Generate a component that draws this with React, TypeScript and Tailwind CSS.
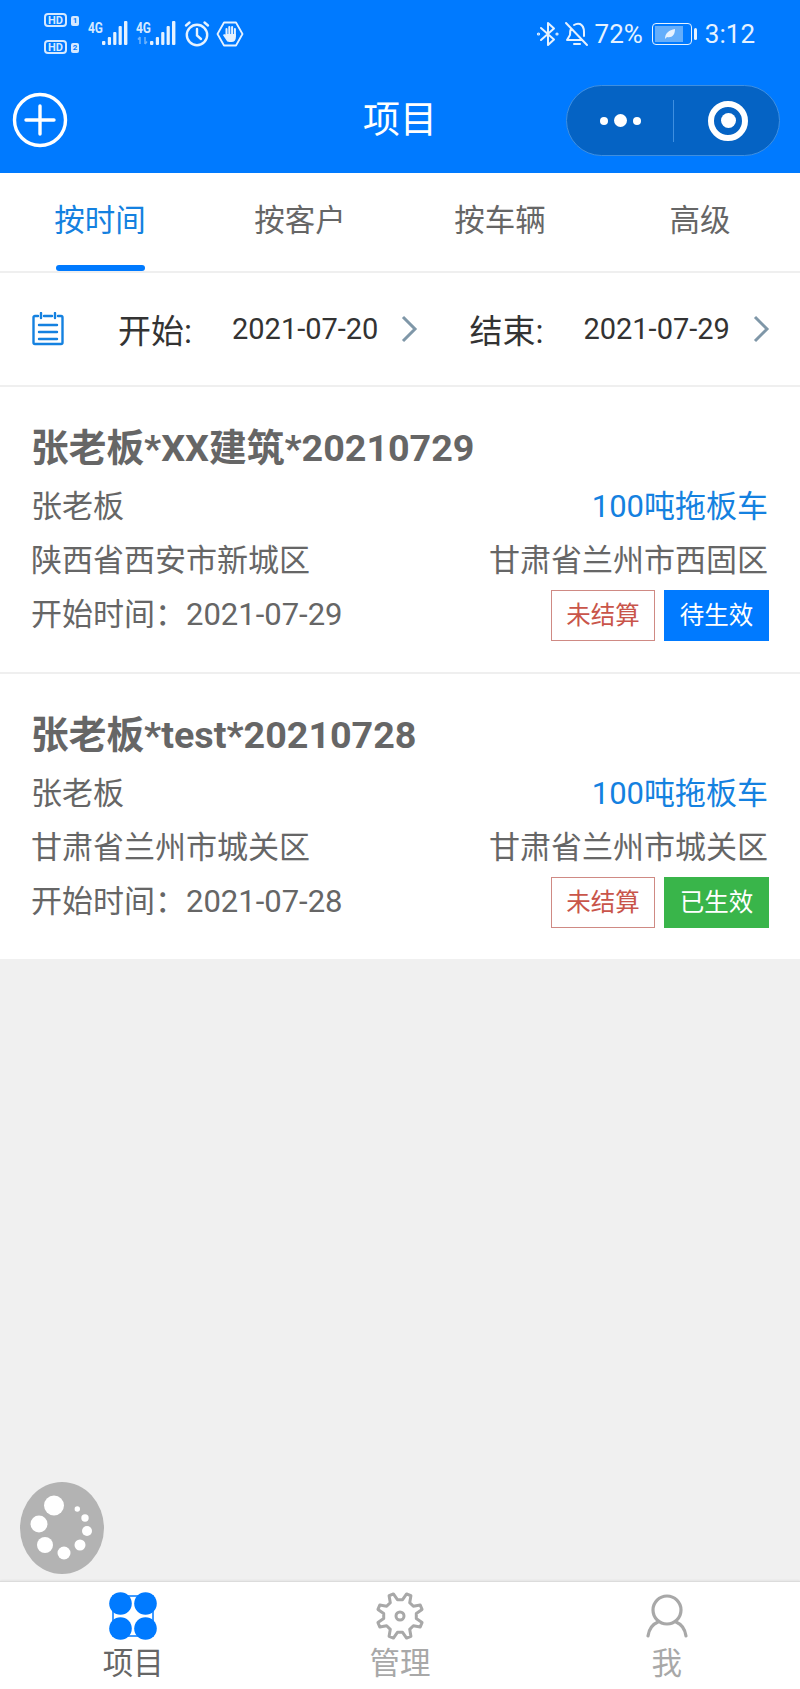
import React from "react";

const sans = "font-['Roboto','Noto_Sans_CJK_SC',sans-serif]";

function gearPath(cx: number, cy: number, rOut: number, rIn: number, teeth: number) {
  const pts: string[] = [];
  const step = (Math.PI * 2) / teeth;
  for (let i = 0; i < teeth; i++) {
    const a = -Math.PI / 2 + step / 2 + i * step;
    const list: [number, number][] = [
      [rIn, a - step * 0.3],
      [rOut, a - step * 0.13],
      [rOut, a + step * 0.13],
      [rIn, a + step * 0.3],
    ];
    for (const [r, t] of list) {
      pts.push(`${(cx + r * Math.cos(t)).toFixed(2)} ${(cy + r * Math.sin(t)).toFixed(2)}`);
    }
  }
  return `M${pts.join("L")}Z`;
}

function HdBadge({ n }: { n: string }) {
  return (
    <div className="flex items-center gap-[4px] h-[14px]">
      <span className="flex items-center justify-center w-[23px] h-[14px] rounded-[4px] border-2 border-[#d5e9ff] text-[11px] leading-none font-bold text-[#d5e9ff]">HD</span>
      <span className="flex items-center justify-center w-[8px] h-[10px] mt-[1px] rounded-[2px] bg-[#d5e9ff] text-[8px] leading-none font-bold text-[#007aff]">{n}</span>
    </div>
  );
}

function Signal({ arrows }: { arrows?: boolean }) {
  return (
    <div className="relative w-[46px] h-[28px]">
      <span className="absolute left-0 top-[1px] text-[14px] leading-none font-bold text-[#d5e9ff] scale-x-[0.85] origin-left">4G</span>
      <svg width="46" height="28" viewBox="0 0 46 28" className="absolute inset-0">
        {arrows && <path d="M4 24V17M2 19.500l2-2.500M9 17v7M11 21.500L9 24" stroke="#6db2fb" strokeWidth="1.500" fill="none" />}
        <g fill="#e6f2ff">
          <rect x="14" y="21" width="3.400" height="4" rx="1" />
          <rect x="19.800" y="17" width="3.200" height="8" rx="1" />
          <rect x="25.200" y="12" width="3.200" height="13" rx="1" />
          <rect x="30.600" y="6" width="3.200" height="19" rx="1" />
          <rect x="36" y="1" width="3.400" height="24" rx="1" />
        </g>
      </svg>
    </div>
  );
}

function StatusBar() {
  return (
    <div className="h-[68px] flex items-start justify-between pl-[44px] pr-[45px] pt-[13px] text-[#e6f2ff]">
      <div className="flex items-start">
        <div className="flex flex-col gap-[13px]">
          <HdBadge n="1" />
          <HdBadge n="2" />
        </div>
        <div className="flex ml-[9px] mt-[7px] gap-[2px]">
          <Signal />
          <Signal arrows />
        </div>
        <svg width="28" height="28" viewBox="0 0 28 28" className="ml-[1px] mt-[7px]" fill="none" stroke="#e6f2ff" strokeWidth="2.400" strokeLinecap="round">
          <circle cx="14" cy="15" r="10.200" />
          <path d="M14 9v6.500l4 3.500M3 5.500l3.500-3M25 5.500l-3.500-3" />
        </svg>
        <svg width="28" height="28" viewBox="0 0 28 28" className="ml-[5px] mt-[7px]" fill="none">
          <path d="M8 2.500h12L26.500 14 20 25.500H8L1.500 14z" stroke="#e6f2ff" strokeWidth="1.800" strokeLinejoin="round" />
          <g fill="#e6f2ff">
            <rect x="9.500" y="8" width="2" height="9" rx="1" />
            <rect x="12.300" y="6" width="2" height="9" rx="1" />
            <rect x="15.100" y="6" width="2" height="9" rx="1" />
            <rect x="17.900" y="8" width="2" height="9" rx="1" />
            <path d="M9.500 14h10.400v3q0 5-4.500 5h-2q-2.500 0-3.500-2.500l-3-4.500 1.500-1 1.100 1.300z" />
          </g>
        </svg>
      </div>
      <div className="flex items-center h-[40px] mt-[1px]">
        <svg width="24" height="28" viewBox="0 0 24 28" fill="none" stroke="#e6f2ff" strokeWidth="2" strokeLinejoin="round" strokeLinecap="round">
          <path d="M5 8l13 11.500L12 25V3l6 5.500L5 20" />
          <circle cx="2.500" cy="14" r="0.600" />
          <circle cx="21" cy="14" r="0.600" />
        </svg>
        <svg width="26" height="26" viewBox="0 0 26 26" className="ml-[4px]" fill="none" stroke="#e6f2ff" strokeWidth="2" strokeLinecap="round" strokeLinejoin="round">
          <path d="M2 2l21 22M7 7.500c-1 2-1 4-1 6.500l-3 5h15M10 4q3-2 6-1 4 2 4 8v4" />
          <path d="M10 23h6" />
        </svg>
        <span className="ml-[5px] text-[26px] leading-none text-[#e6f2ff]">72%</span>
        <div className="ml-[9px] w-[40px] h-[22px] rounded-[4px] border-[1.500px] border-[#e6f2ff] p-[2px]">
          <div className="w-[28px] h-full bg-[#64aefb] flex items-center justify-end pr-[7px]">
            <svg width="12" height="12" viewBox="0 0 12 12"><path d="M1 11C1 5 5 2 11 1c0 6-3 9-8 8z" fill="#e6f2ff" /></svg>
          </div>
        </div>
        <div className="ml-[2px] w-[3px] h-[12px] rounded-[2px] bg-[#e6f2ff]" />
        <span className="ml-[8px] text-[26px] leading-none text-[#e6f2ff]">3:12</span>
      </div>
    </div>
  );
}

function NavBar() {
  return (
    <div className="relative h-[105px] flex items-center justify-between pl-[12px] pr-[20px]">
      <svg width="56" height="56" viewBox="0 0 56 56" fill="none" stroke="white" strokeWidth="3.400" strokeLinecap="round" className="mt-[-1px]">
        <circle cx="28" cy="28" r="25.500" />
        <path d="M28 14v28M14 28h28" />
      </svg>
      <span className="absolute left-0 right-0 text-center text-[37px] leading-none text-white">项目</span>
      <div className="w-[214px] h-[71px] rounded-full bg-[#0563c4] border border-[#3f8fe0] flex items-center">
        <div className="w-[106px] flex items-center justify-center gap-[6px] pl-[1px]">
          <span className="w-[8px] h-[8px] rounded-full bg-white" />
          <span className="w-[13px] h-[13px] rounded-full bg-white" />
          <span className="w-[8px] h-[8px] rounded-full bg-white" />
        </div>
        <div className="w-px h-[42px] bg-[#3f8fe0]" />
        <div className="flex-1 flex items-center justify-center pl-[3px]">
          <div className="w-[40px] h-[40px] rounded-full border-[6px] border-white flex items-center justify-center">
            <div className="w-[15px] h-[15px] rounded-full bg-white" />
          </div>
        </div>
      </div>
    </div>
  );
}

function Tabs() {
  const items = ["按时间", "按客户", "按车辆", "高级"];
  return (
    <div className="h-[100px] bg-white border-b-2 border-[#efefef] grid grid-cols-4">
      {items.map((t, i) => (
        <div key={t} className="relative flex justify-center pt-[28px]">
          <span className={`text-[30.500px] leading-[40px] ${i === 0 ? "text-[#1481e0]" : "text-[#666666]"}`}>{t}</span>
          {i === 0 && <span className="absolute left-[56px] bottom-0 w-[89px] h-[6px] rounded-full bg-[#007aff]" />}
        </div>
      ))}
    </div>
  );
}

function Chevron() {
  return (
    <svg width="18" height="28" viewBox="0 0 18 28" fill="none" stroke="#7f97a8" strokeWidth="3">
      <path d="M3 2l12 12L3 26" />
    </svg>
  );
}

function DateRow() {
  return (
    <div className="h-[114px] bg-white border-b-2 border-[#efefef] flex items-center pl-[32px] text-[#333333]">
      <svg width="32" height="34" viewBox="0 0 32 34" fill="none" stroke="#1481e0" strokeWidth="2.400" strokeLinecap="round">
        <path d="M6 4H3a1.500 1.500 0 0 0-1.500 1.500v25A1.500 1.500 0 0 0 3 32h26a1.500 1.500 0 0 0 1.500-1.500v-25A1.500 1.500 0 0 0 29 4h-3M12 4h8M9 1v5M23 1v5M7 13h18M7 20h18M7 27h18" />
      </svg>
      <span className="ml-[54px] text-[33px] leading-none mt-[5px]">开始:</span>
      <span className="ml-[40px] text-[29px] leading-none">2021-07-20</span>
      <span className="ml-[22px]"><Chevron /></span>
      <span className="ml-[51px] text-[33px] leading-none mt-[5px]">结束:</span>
      <span className="ml-[40px] text-[29px] leading-none">2021-07-29</span>
      <span className="ml-[22px]"><Chevron /></span>
    </div>
  );
}

type CardProps = { title: string; from: string; to: string; date: string; status: string; statusCls: string; border?: boolean };

function Card({ title, from, to, date, status, statusCls, border }: CardProps) {
  return (
    <div className={`bg-white pl-[31px] pr-[32px] pt-[37px] ${border ? "h-[287px] border-b-2 border-[#efefef]" : "h-[285px]"}`}>
      <div className="text-[37.700px] leading-[48px] font-bold text-[#666666]">{title}</div>
      <div className="mt-[8px] flex justify-between items-center text-[31px] leading-[54px] text-[#666666]">
        <span>张老板</span>
        <span className="text-[#1481e0]">100吨拖板车</span>
      </div>
      <div className="flex justify-between items-center text-[31px] leading-[54px] text-[#666666]">
        <span>{from}</span>
        <span>{to}</span>
      </div>
      <div className="flex justify-between items-center h-[54px] text-[31px] text-[#666666]">
        <span>开始时间：{date}</span>
        <div className="flex gap-[9px] text-[24.500px] mr-[-1px]">
          <span className="w-[104px] h-[51px] pt-[3px] flex items-center justify-center border border-[#cf8a84] text-[#c9554a]">未结算</span>
          <span className={`w-[105px] h-[51px] pt-[3px] flex items-center justify-center text-white ${statusCls}`}>{status}</span>
        </div>
      </div>
    </div>
  );
}

function Spinner() {
  return (
    <svg width="84" height="92" viewBox="0 0 84 92" className="absolute left-[20px] bottom-[7px]">
      <ellipse cx="42" cy="46" rx="42" ry="46" fill="#b3b3b3" />
      <g fill="white">
        <circle cx="34" cy="23.500" r="10" />
        <circle cx="19" cy="42" r="8.500" />
        <circle cx="25" cy="63" r="8" />
        <circle cx="44" cy="71" r="6.500" />
        <circle cx="60" cy="63" r="5.500" />
        <circle cx="67" cy="49" r="5" />
        <circle cx="65" cy="36" r="3.700" />
        <circle cx="57.300" cy="27" r="2.700" />
      </g>
    </svg>
  );
}

function BottomBar() {
  return (
    <div className="h-[108px] bg-white border-t border-[#dcdcdc] grid grid-cols-3 shadow-[0_-1px_2px_rgba(0,0,0,0.05)]">
      <div className="flex flex-col items-center pt-[10px]">
        <svg width="48" height="48" viewBox="0 0 48 48">
          <rect x="4" y="4" width="40" height="40" fill="white" stroke="#007aff" strokeWidth="1.500" />
          <g fill="#007aff">
            <circle cx="11.500" cy="11.500" r="11.300" />
            <circle cx="36.500" cy="11.500" r="11.300" />
            <circle cx="11.500" cy="36.500" r="11.300" />
            <circle cx="36.500" cy="36.500" r="11.300" />
          </g>
        </svg>
        <span className="text-[30.500px] leading-[40px] text-[#666666] mt-[4px]">项目</span>
      </div>
      <div className="flex flex-col items-center pt-[10px]">
        <svg width="50" height="48" viewBox="0 0 50 48" fill="none" stroke="#a8a8a8" strokeWidth="3" strokeLinejoin="round">
          <path d={gearPath(25, 24, 23, 16.500, 8)} />
          <circle cx="25" cy="24" r="4" />
        </svg>
        <span className="text-[30.500px] leading-[40px] text-[#a8a8a8] mt-[4px]">管理</span>
      </div>
      <div className="flex flex-col items-center pt-[10px]">
        <svg width="48" height="48" viewBox="0 0 48 48" fill="none" stroke="#a8a8a8" strokeWidth="3.200" strokeLinecap="round">
          <circle cx="24" cy="18" r="14" />
          <path d="M5 44c1-7 5-12 10-14M43 44c-1-7-5-12-10-14" />
        </svg>
        <span className="text-[30.500px] leading-[40px] text-[#a8a8a8] mt-[4px]">我</span>
      </div>
    </div>
  );
}

export default function App() {
  return (
    <div className={`${sans} relative w-[800px] h-[1689px] flex flex-col bg-[#f0f0f0] overflow-hidden`}>
      <div className="bg-[#007aff]">
        <StatusBar />
        <NavBar />
      </div>
      <Tabs />
      <DateRow />
      <Card title="张老板*XX建筑*20210729" from="陕西省西安市新城区" to="甘肃省兰州市西固区" date="2021-07-29" status="待生效" statusCls="bg-[#007aff]" border />
      <Card title="张老板*test*20210728" from="甘肃省兰州市城关区" to="甘肃省兰州市城关区" date="2021-07-28" status="已生效" statusCls="bg-[#39b54a]" />
      <div className="relative flex-1">
        <Spinner />
      </div>
      <BottomBar />
    </div>
  );
}
